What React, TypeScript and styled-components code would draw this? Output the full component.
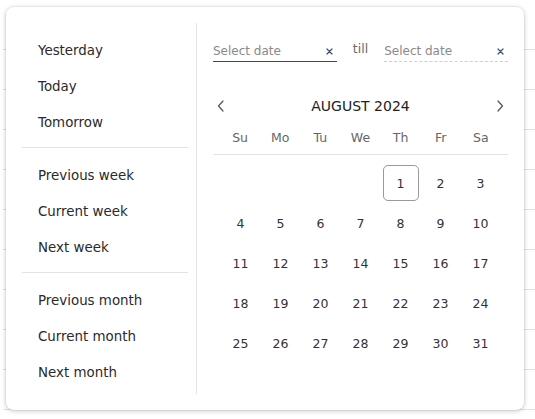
import React from 'react';
import styled, {createGlobalStyle} from 'styled-components';

const GlobalStyle = createGlobalStyle`
  html, body {
    margin: 0;
    padding: 0;
    background: #fff;
  }

  body {
    font-family: "DejaVu Sans", "Noto Sans", sans-serif;
    color: #2b2b2b;
  }
`;

const presetGroups = [
    ['Yesterday', 'Today', 'Tomorrow'],
    ['Previous week', 'Current week', 'Next week'],
    ['Previous month', 'Current month', 'Next month'],
];

const weekDays = ['Su', 'Mo', 'Tu', 'We', 'Th', 'Fr', 'Sa'];

// August 2024 starts on a Thursday
const firstWeekday = 4;
const daysInMonth = 31;
const selectedDay = 1;

const buildWeeks = () => {
    const cells: (number | null)[] = [];
    for (let i = 0; i < firstWeekday; i++) cells.push(null);
    for (let d = 1; d <= daysInMonth; d++) cells.push(d);
    while (cells.length % 7 !== 0) cells.push(null);
    const weeks: (number | null)[][] = [];
    for (let i = 0; i < cells.length; i += 7) weeks.push(cells.slice(i, i + 7));
    return weeks;
};

const ClearIcon = () => (
    <svg width="7" height="7" viewBox="0 0 7 7">
        <path d="M1 1L6 6M6 1L1 6" stroke="#3b4e6e" strokeWidth="1.2" strokeLinecap="round"/>
    </svg>
);

const Chevron: React.FC<{dir: 'left' | 'right'}> = ({dir}) => (
    <svg width="8" height="12" viewBox="0 0 8 12">
        <path
            d={dir === 'left' ? 'M6 1L1.5 6L6 11' : 'M2 1L6.5 6L2 11'}
            fill="none"
            stroke="#555"
            strokeWidth="1.2"
            strokeLinecap="round"
            strokeLinejoin="round"
        />
    </svg>
);

const App: React.FC = () => {
    const weeks = buildWeeks();

    return (
        <>
            <GlobalStyle/>
            <Page>
                <Table>
                    {Array.from({length: 10}).map((_, i) => (
                        <TableRow key={i}/>
                    ))}
                </Table>
                <Popup>
                    <Presets>
                        {presetGroups.map((group, gi) => (
                            <React.Fragment key={gi}>
                                {gi > 0 && <PresetDivider/>}
                                {group.map(label => (
                                    <PresetItem key={label}>{label}</PresetItem>
                                ))}
                            </React.Fragment>
                        ))}
                    </Presets>
                    <CalendarPane>
                        <RangeInputs>
                            <DateInput active>
                                <Placeholder>Select date</Placeholder>
                                <ClearButton><ClearIcon/></ClearButton>
                            </DateInput>
                            <Till>till</Till>
                            <DateInput>
                                <Placeholder>Select date</Placeholder>
                                <ClearButton><ClearIcon/></ClearButton>
                            </DateInput>
                        </RangeInputs>
                        <MonthHeader>
                            <NavButton><Chevron dir="left"/></NavButton>
                            <MonthTitle>AUGUST 2024</MonthTitle>
                            <NavButton><Chevron dir="right"/></NavButton>
                        </MonthHeader>
                        <WeekdayRow>
                            {weekDays.map(d => (
                                <Weekday key={d}>{d}</Weekday>
                            ))}
                        </WeekdayRow>
                        <DaysGrid>
                            {weeks.map((week, wi) =>
                                week.map((day, di) => (
                                    <DayCell key={`${wi}-${di}`}>
                                        {day && <Day selected={day === selectedDay}>{day}</Day>}
                                    </DayCell>
                                ))
                            )}
                        </DaysGrid>
                    </CalendarPane>
                </Popup>
            </Page>
        </>
    );
};

const Page = styled.div`
  position: relative;
  width: 535px;
  height: 419px;
  overflow: hidden;
`;

const Table = styled.div`
  margin: 10px 0 0 3px;
`;

const TableRow = styled.div`
  height: 40px;
  box-sizing: border-box;
  border-bottom: 1px solid #e2e2e2;
`;

const Popup = styled.div`
  position: absolute;
  left: 6px;
  top: 7px;
  width: 518px;
  height: 403px;
  box-sizing: border-box;
  padding: 16px;
  display: flex;
  background: #fff;
  border-radius: 8px;
  box-shadow: 0 1px 5px rgba(0, 0, 0, 0.22), 0 0 0 1px rgba(0, 0, 0, 0.04);
`;

const Presets = styled.div`
  width: 166px;
  margin-right: 8px;
  padding-top: 8px;
  display: flex;
  flex-direction: column;
`;

const PresetItem = styled.div`
  height: 36px;
  display: flex;
  align-items: center;
  padding: 2px 0 0 16px;
  box-sizing: border-box;
  font-size: 13.4px;
  color: #2a2a2a;
  cursor: pointer;
`;

const PresetDivider = styled.div`
  height: 1px;
  margin: 8px 0;
  background: #e3e3e3;
`;

const CalendarPane = styled.div`
  flex: 1;
  border-left: 1px solid #e3e3e3;
  padding: 15px 0 0 16px;
  display: flex;
  flex-direction: column;
`;

const RangeInputs = styled.div`
  display: flex;
  align-items: center;
  gap: 16px;
`;

const DateInput = styled.div<{active?: boolean}>`
  flex: 1;
  height: 21px;
  padding: 2px 4px 0 0;
  display: flex;
  align-items: center;
  justify-content: space-between;
  border-bottom: 1px ${p => (p.active ? 'solid #1d4d9b' : 'dashed #cfcfcf')};
`;

const Placeholder = styled.span`
  font-size: 12px;
  color: #8a8a8a;
`;

const ClearButton = styled.span`
  display: flex;
  align-items: center;
  margin-top: 1px;
`;

const Till = styled.span`
  font-size: 12.5px;
  color: #6a6a6a;
  margin-top: -4px;
`;

const MonthHeader = styled.div`
  height: 40px;
  margin-top: 24px;
  display: flex;
  align-items: center;
  justify-content: space-between;
  padding: 0 4px;
`;

const NavButton = styled.span`
  width: 8px;
  display: flex;
  align-items: center;
  cursor: pointer;
`;

const MonthTitle = styled.span`
  font-size: 14px;
  color: #222;
`;

const WeekdayRow = styled.div`
  display: grid;
  grid-template-columns: repeat(7, 1fr);
  padding: 0 7px 4px;
  border-bottom: 1px solid #e3e3e3;
`;

const Weekday = styled.span`
  line-height: 24px;
  text-align: center;
  font-size: 12.5px;
  color: #666;
`;

const DaysGrid = styled.div`
  display: grid;
  grid-template-columns: repeat(7, 40px);
  grid-auto-rows: 40px;
  justify-content: center;
  padding-top: 8px;
`;

const DayCell = styled.div`
  display: flex;
  align-items: center;
  justify-content: center;
`;

const Day = styled.span<{selected?: boolean}>`
  width: 36px;
  height: 36px;
  box-sizing: border-box;
  display: flex;
  align-items: center;
  justify-content: center;
  font-size: 12.5px;
  color: #333;
  border-radius: 5px;
  border: 1px solid ${p => (p.selected ? '#9a9a9a' : 'transparent')};
  cursor: pointer;
`;

export default App;
